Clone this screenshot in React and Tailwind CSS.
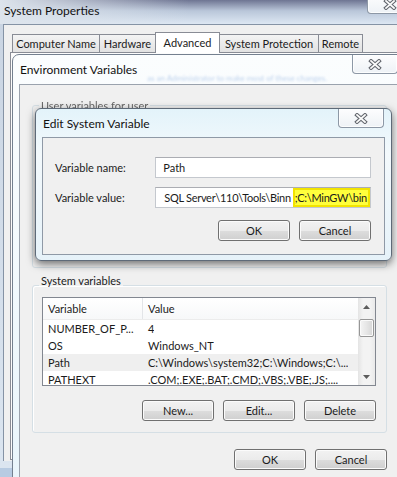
import React from 'react'

function CloseGlyph() {
  return (
    <svg width="14" height="11" viewBox="0 0 14 11">
      <path d="M3 2 L11 9 M11 2 L3 9" stroke="#63676e" strokeWidth="3.8" strokeLinecap="square" />
      <path d="M3 2 L11 9 M11 2 L3 9" stroke="#fbfbfb" strokeWidth="1.7" strokeLinecap="square" />
    </svg>
  )
}

function CloseButton({ className }) {
  return (
    <div className={`w-[46px] h-[19px] rounded-b-[4px] border border-t-0 border-[#8d98a6] bg-[linear-gradient(to_bottom,#fdfdfe,#eef2f6)] shadow-[inset_0_0_0_1px_rgba(255,255,255,0.8)] flex items-center justify-center shrink-0 ${className}`}>
      <CloseGlyph />
    </div>
  )
}

function Button({ children }) {
  return (
    <div className="w-[72px] h-[21px] rounded-[3px] border border-[#707070] bg-[linear-gradient(to_bottom,#f2f2f2_0%,#ebebeb_50%,#dddddd_51%,#cfcfcf_100%)] shadow-[inset_0_0_0_1px_#fbfbfb] flex items-center justify-center">
      {children}
    </div>
  )
}

function Arrow({ up }) {
  return (
    <svg width="7" height="4" viewBox="0 0 7 4">
      <path d={up ? 'M0 4 L3.5 0 L7 4 Z' : 'M0 0 L3.5 4 L7 0 Z'} fill="#5c5c5c" />
    </svg>
  )
}

const rows = [
  { name: 'NUMBER_OF_P...', value: '4' },
  { name: 'OS', value: 'Windows_NT' },
  { name: 'Path', value: 'C:\\Windows\\system32;C:\\Windows;C:\\...', hot: true },
  { name: 'PATHEXT', value: '.COM;.EXE;.BAT;.CMD;.VBS;.VBE;.JS;....' },
]

export default function App() {
  return (
    <div className="relative w-[397px] h-[477px] overflow-hidden bg-[#b7cbe2] font-['Lato',sans-serif] text-[11px] leading-[15px] text-[#1b1b1b]">
      {/* System Properties */}
      <div className="absolute left-0 top-0 w-[420px] h-[468px] flex flex-col bg-[linear-gradient(to_bottom,#c9d4e2,#dbe5f0)]">
        <div className="h-[24px] shrink-0 flex bg-[linear-gradient(to_right,rgba(221,228,236,1)_0%,rgba(221,228,236,0)_45%),linear-gradient(to_bottom,#6e7592_0%,#b9c6d9_45%,#dde7f3_100%)]">
          <div className="pl-[4px] pt-[3px] text-[12px] text-[#111]">System Properties</div>
          <div className="ml-auto mr-[7px] -mt-[5px]">
            <CloseButton className="h-[19px]" />
          </div>
        </div>
        <div className="ml-[3px] mb-[7px] flex-1 border-l border-t border-[#8593a5] bg-[#f0f0f0]">
          <div className="pl-[8px] pt-[7px] flex items-end">
            <div className="w-[88px] h-[18px] border border-b-0 border-[#898c95] bg-[linear-gradient(to_bottom,#f4f4f4,#e2e2e2)] flex items-center justify-center">Computer Name</div>
            <div className="w-[57px] h-[18px] -ml-px border border-b-0 border-[#898c95] bg-[linear-gradient(to_bottom,#f4f4f4,#e2e2e2)] flex items-center justify-center">Hardware</div>
            <div className="relative z-10 w-[65px] h-[21px] -ml-px -mb-px border border-b-0 border-[#898c95] bg-white flex items-start justify-center pt-[2px]">Advanced</div>
            <div className="w-[100px] h-[18px] -ml-px border border-b-0 border-[#898c95] bg-[linear-gradient(to_bottom,#f4f4f4,#e2e2e2)] flex items-center justify-center">System Protection</div>
            <div className="w-[45px] h-[18px] -ml-px border border-b-0 border-[#898c95] bg-[linear-gradient(to_bottom,#f4f4f4,#e2e2e2)] flex items-center justify-center">Remote</div>
          </div>
          <div className="ml-[6px] h-[408px] border border-[#898c95] bg-[#fcfcfc]" />
        </div>
      </div>

      {/* Environment Variables */}
      <div className="absolute left-[12px] top-[54px] w-[394px] h-[430px] flex flex-col rounded-tl-[7px] border border-[#74808f] bg-[linear-gradient(to_bottom,#fbfdfe,#e9f5fb)]">
        <div className="relative h-[29px] shrink-0 flex">
          <div className="pl-[7px] self-center text-[12px] text-[#111]">Environment Variables</div>
          <div className="absolute left-[134px] top-[16px] whitespace-nowrap text-[8px] text-[#2f6cc4] opacity-30 blur-[1px]">as an Administrator to make most of these changes.</div>
          <CloseButton className="relative ml-auto mr-[7px] self-start" />
        </div>
        <div className="ml-[6px] flex-1 border-l border-t border-[#9aa2ad] bg-[#f0f0f0]">
          <fieldset className="ml-[12px] mt-[13px] w-[355px] h-[170px] rounded-[3px] border border-[#d5dfe5]">
            <legend className="ml-[6px] px-[2px] text-[#444] blur-[0.7px] opacity-80">User variables for user</legend>
          </fieldset>
          <fieldset className="ml-[12px] mt-[6px] w-[355px] rounded-[3px] border border-[#d5dfe5] pb-[11px] shadow-[inset_1px_1px_0_#fff]">
            <legend className="ml-[6px] px-[2px] h-[22px] leading-[14px]">System variables</legend>
            <div className="ml-[9px] mt-[1px] w-[334px] h-[89px] border border-[#828790] bg-white flex overflow-hidden">
              <div className="flex-1 flex flex-col min-w-0">
                <div className="h-[22px] shrink-0 flex items-center border-b border-[#ececec] bg-[linear-gradient(to_bottom,#ffffff,#f7f8f9)]">
                  <div className="w-[100px] pl-[5px] h-full flex items-center border-r border-[#e3e5e8]">Variable</div>
                  <div className="pl-[5px]">Value</div>
                </div>
                {rows.map((r) => (
                  <div key={r.name} className={`h-[17px] shrink-0 flex items-center whitespace-nowrap ${r.hot ? 'bg-[#efefef]' : ''}`}>
                    <div className="w-[100px] pl-[5px] shrink-0">{r.name}</div>
                    <div className="pl-[5px] overflow-hidden">{r.value}</div>
                  </div>
                ))}
              </div>
              <div className="w-[17px] shrink-0 flex flex-col bg-[linear-gradient(to_right,#e4e4e4,#f3f3f3_30%,#f3f3f3_70%,#e9e9e9)]">
                <div className="h-[17px] flex items-center justify-center">
                  <Arrow up />
                </div>
                <div className="mt-[4px] mx-[1px] h-[18px] rounded-[2px] border border-[#969696] bg-[linear-gradient(to_right,#f4f4f4,#e6e6e6_50%,#d6d6d6)] shadow-[inset_0_0_0_1px_#fafafa]" />
                <div className="mt-auto h-[17px] flex items-center justify-center">
                  <Arrow />
                </div>
              </div>
            </div>
            <div className="ml-[9px] mt-[14px] w-[334px] flex justify-end gap-[9px]">
              <Button>New...</Button>
              <Button>Edit...</Button>
              <Button>Delete</Button>
            </div>
          </fieldset>
          <div className="ml-[12px] mt-[16px] w-[355px] flex justify-end gap-[9px]">
            <Button>OK</Button>
            <Button>Cancel</Button>
          </div>
        </div>
      </div>

      {/* Edit System Variable */}
      <div className="absolute left-[35px] top-[108px] w-[357px] h-[153px] flex flex-col rounded-[6px] border border-[#5e6a78] bg-[linear-gradient(to_bottom,#e3f3fa,#f3f9fc_30%,#e6f2f9)] shadow-[0_3px_9px_rgba(0,0,0,0.55)]">
        <div className="h-[28px] shrink-0 flex">
          <div className="pl-[7px] self-center text-[12px] text-[#111]">Edit System Variable</div>
          <CloseButton className="ml-auto mr-[7px] self-start h-[18px]" />
        </div>
        <div className="mx-[6px] h-[118px] border border-[#8f99a6] bg-[#f0f0f0] pl-[12px] pr-[13px] pt-[19px]">
          <div className="flex items-center">
            <div className="w-[101px]">Variable name:</div>
            <div className="w-[217px] h-[21px] border border-[#c4c8ce] border-t-[#abadb3] bg-white pl-[7px] flex items-center">Path</div>
          </div>
          <div className="mt-[9px] flex items-center">
            <div className="w-[101px]">Variable value:</div>
            <div className="w-[217px] h-[21px] border border-[#c4c8ce] border-t-[#abadb3] bg-white pl-[8px] flex items-stretch overflow-hidden whitespace-nowrap tracking-[-0.3px]">
              <span className="self-center pr-[2px]">{'SQL Server\\110\\Tools\\Binn'}</span>
              <span className="flex-1 flex items-center bg-[#ffff3c] border-2 border-[#f2e400]">{';C:\\MinGW\\bin'}</span>
            </div>
          </div>
          <div className="mt-[12px] flex justify-end gap-[9px]">
            <Button>OK</Button>
            <Button>Cancel</Button>
          </div>
        </div>
      </div>
    </div>
  )
}
